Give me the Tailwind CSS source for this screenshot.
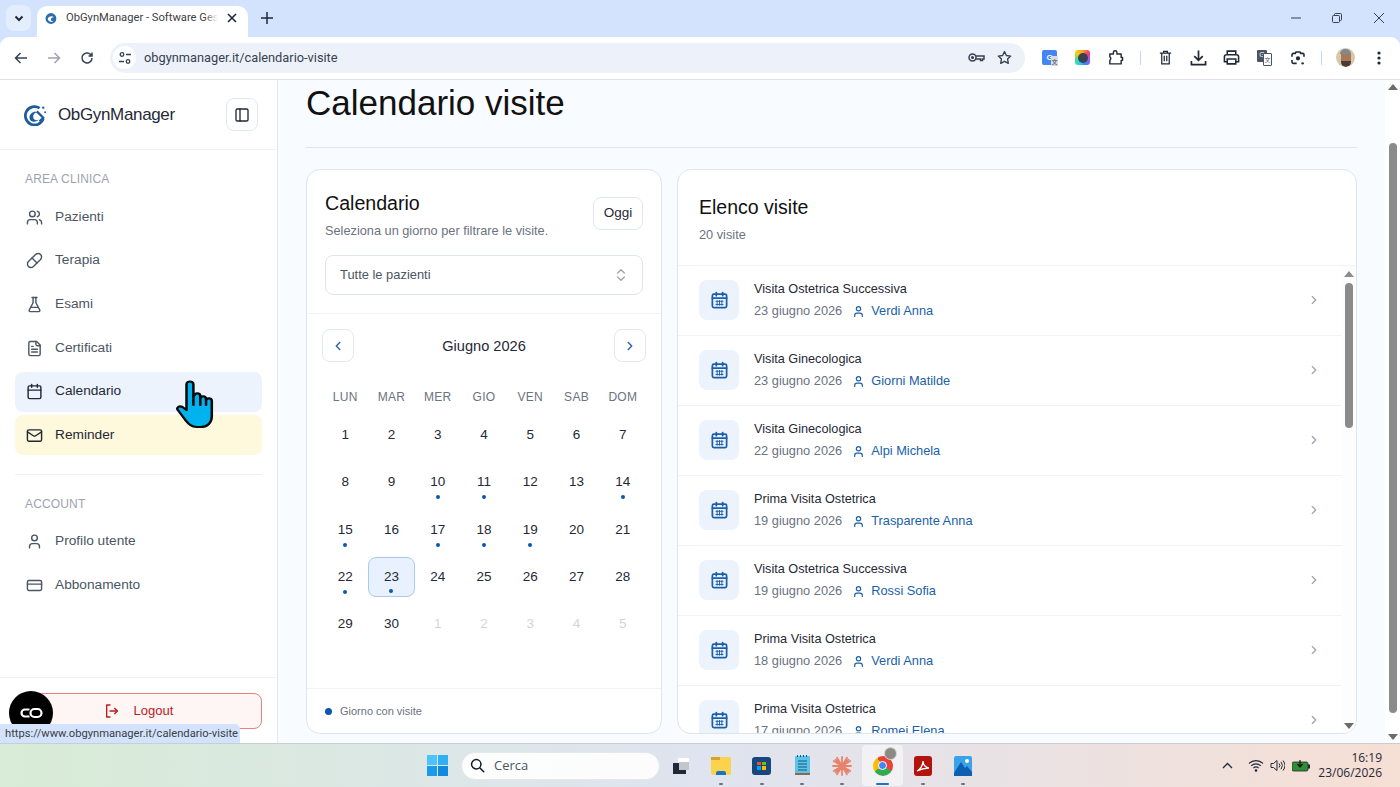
<!DOCTYPE html>
<html lang="it">
<head>
<meta charset="UTF-8">
<title>ObGynManager - Calendario visite</title>
<script src="https://cdn.jsdelivr.net/npm/@tailwindcss/browser@4"></script>
</head>
<body class="w-[1400px] h-[787px] overflow-hidden flex flex-col bg-white font-['Liberation_Sans',sans-serif]">

<!-- Barra schede -->
<div class="h-[37px] shrink-0 bg-[#d3e3fd] flex items-end relative font-['Roboto',sans-serif]">
  <div class="absolute left-[6px] top-[5px] w-[25px] h-[26px] rounded-lg bg-[#e4edfc] flex items-center justify-center">
    <svg class="w-3 h-3" viewBox="0 0 12 12" fill="none" stroke="#1f2937" stroke-width="2"><path d="M2.500 4.500 6 8l3.500-3.500"/></svg>
  </div>
  <div class="ml-[37px] w-[211px] h-[31px] bg-white rounded-t-[10px] flex items-center pl-[7px] pr-[8px] pb-[7px]">
    <svg class="w-[13px] h-[13px] ml-[1px]" viewBox="0 0 24 24"><circle cx="11" cy="12" r="10" fill="#2b6cb0"/><path d="M5 12c3-5 9-5 12-2-4-1-6 1-6 4 0 2 2 4 5 4-5 2-11-1-11-6Z" fill="#fff"/></svg>
    <span class="relative ml-[8px] w-[152px] text-[11.200px] text-[#3c4043] whitespace-nowrap overflow-hidden">ObGynManager - Software Gest<span class="absolute right-0 top-0 bottom-0 w-[14px] bg-linear-to-r from-white/0 to-white"></span></span>
    <svg class="ml-[9px] w-[10px] h-[10px]" viewBox="0 0 10 10" stroke="#1f2937" stroke-width="1.600"><path d="m1 1 8 8M9 1 1 9"/></svg>
  </div>
  <svg class="absolute left-[261px] top-[12px] w-3 h-3" viewBox="0 0 12 12" stroke="#1f2937" stroke-width="1.500"><path d="M6 0v12M0 6h12"/></svg>
  <div class="ml-auto h-full flex items-center pb-[1px]">
    <svg class="w-[10px] h-[10px] mr-[31px]" viewBox="0 0 10 10" stroke="#374151" stroke-width="1"><path d="M0 5h10"/></svg>
    <svg class="w-[10px] h-[10px] mr-[32px]" viewBox="0 0 10 10" fill="none" stroke="#374151" stroke-width="1"><rect x=".5" y="2.500" width="7" height="7" rx="1"/><path d="M2.500 2.500v-1a1 1 0 0 1 1-1h5a1 1 0 0 1 1 1v5a1 1 0 0 1-1 1h-1"/></svg>
    <svg class="w-[10px] h-[10px] mr-[16px]" viewBox="0 0 10 10" stroke="#374151" stroke-width="1"><path d="m0 0 10 10M10 0 0 10"/></svg>
  </div>
</div>

<!-- Barra indirizzi -->
<div class="h-[43px] shrink-0 bg-[#d3e3fd]">
  <div class="h-full bg-white rounded-t-[9px] border-b border-[#dfe3e8] flex items-center pl-[4px] pb-[1px]">
    <div class="w-[33px] flex justify-center"><svg class="w-[14px] h-[14px]" viewBox="0 0 14 14" fill="none" stroke="#374151" stroke-width="1.500"><path d="M13 7H1.500M6.500 2l-5 5 5 5"/></svg></div>
    <div class="w-[33px] flex justify-center"><svg class="w-[14px] h-[14px]" viewBox="0 0 14 14" fill="none" stroke="#9ca3af" stroke-width="1.500"><path d="M1 7h11.500M7.500 2l5 5-5 5"/></svg></div>
    <div class="w-[33px] flex justify-center"><svg class="w-[14px] h-[14px]" viewBox="0 0 14 14" fill="none" stroke="#374151" stroke-width="1.500"><path d="M12 7a5 5 0 1 1-1.500-3.600L12 5M12 1.500V5H8.500"/></svg></div>
    <div class="ml-[7px] w-[915px] h-[30px] rounded-full bg-[#edf2fa] flex items-center pl-[3px] pr-[13px]">
      <div class="w-[23px] h-[23px] rounded-full bg-white flex items-center justify-center">
        <svg class="w-[14px] h-[14px]" viewBox="0 0 14 14" fill="none" stroke="#374151" stroke-width="1.300"><circle cx="4" cy="3.500" r="1.800"/><path d="M8 3.500h5M1 10.500h5"/><circle cx="10" cy="10.500" r="1.800"/></svg>
      </div>
      <span class="ml-[8px] text-[12.800px] text-[#374151] font-['Roboto',sans-serif]">obgynmanager.it/calendario-visite</span>
      <svg class="ml-auto w-[17px] h-[11px]" viewBox="0 0 17 11" fill="none" stroke="#374151" stroke-width="1.500"><circle cx="4.500" cy="5.500" r="3.500"/><circle cx="4.500" cy="5.500" r=".8" fill="#374151"/><path d="M8 4h8v3h-1.500v1.500h-2V7H8"/></svg>
      <svg class="ml-[12px] w-[15px] h-[15px]" viewBox="0 0 24 24" fill="none" stroke="#374151" stroke-width="2.200" stroke-linejoin="round"><path d="m12 2.500 3 6.300 6.900.9-5 4.800 1.200 6.900-6.100-3.300-6.100 3.300 1.200-6.900-5-4.800 6.900-.9Z"/></svg>
    </div>
    <div class="ml-[8px] w-[33px] flex justify-center">
      <div class="relative w-[15px] h-[15px] bg-[#4285f4] rounded-[2px] text-white text-[8px] font-bold flex items-center justify-center">G<span class="absolute left-[9px] top-[6px] w-[7px] h-[10px] bg-[#d9dce0] text-[#6b7280] text-[6px] flex items-center justify-center font-['Noto_Sans_CJK_SC',sans-serif]">文</span></div>
    </div>
    <div class="w-[33px] flex justify-center">
      <div class="w-[15px] h-[15px] rounded-[3px] bg-[conic-gradient(#f5a623,#f43f5e,#a855f7,#3b82f6,#22d3ee,#4ade80,#facc15,#f5a623)] flex items-center justify-center"><div class="w-[10px] h-[10px] rounded-full bg-[#374151]"></div></div>
    </div>
    <div class="w-[33px] flex justify-center"><svg class="w-[17px] h-[17px]" viewBox="0 0 24 24" fill="none" stroke="#1f2937" stroke-width="2" stroke-linejoin="round"><path d="M4 7h5V5a2.500 2.500 0 0 1 5 0v2h6v5h2v4h-2v5H4v-5a3 3 0 0 0 0-5Z"/></svg></div>
    <div class="ml-[8px] mr-[8px] w-px h-[14px] bg-[#c7d7f0]"></div>
    <div class="w-[33px] flex justify-center"><svg class="w-[15px] h-[15px]" viewBox="0 0 24 24" fill="none" stroke="#1f2937" stroke-width="2"><path d="M3 5h18M9 5V2h6v3M6 5v17h12V5M10 9v9M14 9v9"/></svg></div>
    <div class="w-[33px] flex justify-center"><svg class="w-[17px] h-[17px]" viewBox="0 0 24 24" fill="none" stroke="#1f2937" stroke-width="2.400"><path d="M12 2v13M6 10l6 6 6-6M2 17v5h20v-5"/></svg></div>
    <div class="w-[33px] flex justify-center"><svg class="w-[17px] h-[17px]" viewBox="0 0 24 24" fill="none" stroke="#1f2937" stroke-width="2.200"><path d="M6 8V3h12v5M6 18H2v-7a3 3 0 0 1 3-3h14a3 3 0 0 1 3 3v7h-4"/><path d="M6 14h12v7H6z"/></svg></div>
    <div class="w-[33px] flex justify-center">
      <div class="relative w-[15px] h-[16px]"><span class="absolute left-0 top-0 w-[10px] h-[12px] bg-[#4b5563] rounded-[1px] text-white text-[7px] flex items-center justify-center">G</span><span class="absolute left-[6px] top-[3px] w-[9px] h-[13px] bg-white border border-[#4b5563] rounded-[1px] text-[#4b5563] text-[6px] flex items-center justify-center font-['Noto_Sans_CJK_SC',sans-serif]">文</span></div>
    </div>
    <div class="w-[33px] flex justify-center"><svg class="w-[16px] h-[16px]" viewBox="0 0 24 24" fill="none" stroke="#1f2937" stroke-width="2.400"><path d="M3 10V7a2 2 0 0 1 2-2h3l1-2h6l1 2h3a2 2 0 0 1 2 2v3M3 15v3a2 2 0 0 0 2 2h5M21 15v0"/><circle cx="12" cy="12.500" r="2" fill="#1f2937"/><circle cx="19" cy="20" r="1.800" fill="#1f2937" stroke="none"/></svg></div>
    <div class="ml-[7px] mr-[7px] w-px h-[14px] bg-[#c7d7f0]"></div>
    <div class="w-[33px] flex justify-center">
      <div class="w-[19px] h-[19px] rounded-full overflow-hidden bg-[#d6c9a8] flex flex-col items-center">
        <div class="w-[11px] h-[5px] bg-[#7d8b8c] rounded-t-full mt-[1px]"></div>
        <div class="w-[10px] h-[7px] bg-[#a8785a]"></div>
        <div class="w-[10px] h-[6px] bg-[#4b3b33] rounded-b-full"></div>
      </div>
    </div>
    <div class="w-[33px] flex justify-center"><svg class="w-[4px] h-[14px]" viewBox="0 0 4 14" fill="#1f2937"><circle cx="2" cy="2" r="1.600"/><circle cx="2" cy="7" r="1.600"/><circle cx="2" cy="12" r="1.600"/></svg></div>
  </div>
</div>

<!-- Pagina -->
<div id="page" class="relative flex-1 min-h-0 flex overflow-hidden bg-[#f8fbff]">
  <aside class="w-[278px] shrink-0 bg-white border-r border-[#e2e8f0] flex flex-col">
    <div class="h-[70px] shrink-0 border-b border-[#eef1f5] flex items-center pl-[24px] pr-[19px]">
      <svg class="w-[22px] h-[22px]" viewBox="0 0 24 24" fill="none"><path d="M17 4.500A10 10 0 1 0 21 16" stroke="#1d5c9f" stroke-width="3"/><path d="M6 15c0-5 5-8 9-6-3 0-5 2-5 5 0 3 3 5 6 3-3 4-10 3-10-2Z" fill="#1d5c9f"/><path d="M14 8l7 7-4 4" stroke="#1d5c9f" stroke-width="2.500"/><circle cx="21" cy="4" r="1.300" fill="#1d5c9f"/><circle cx="23" cy="9" r="1" fill="#1d5c9f"/></svg>
      <span class="ml-[12px] text-[17px] text-[#1f2937] tracking-[-0.35px]">ObGynManager</span>
      <div class="ml-auto w-[32px] h-[33px] border border-[#e2e8f0] rounded-[8px] flex items-center justify-center">
        <svg class="w-4 h-4" viewBox="0 0 24 24" fill="none" stroke="#1f2937" stroke-width="2" stroke-linecap="round" stroke-linejoin="round"><rect width="18" height="18" x="3" y="3" rx="2"/><path d="M9 3v18"/></svg>
      </div>
    </div>
    <nav class="flex-1 px-[15px] pt-[22px]">
      <p class="pl-[10px] h-[15px] leading-[15px] text-[12px] text-[#9ca3af] tracking-[0.15px]">AREA CLINICA</p>
      <div id="navClinica" class="mt-[10px] flex flex-col gap-[3.700px]"></div>
      <div class="mt-[19px] h-px bg-[#eef1f5]"></div>
      <p class="mt-[22px] pl-[10px] h-[15px] leading-[15px] text-[12px] text-[#9ca3af] tracking-[0.15px]">ACCOUNT</p>
      <div id="navAccount" class="mt-[9px] flex flex-col gap-[3.700px]"></div>
    </nav>
    <div class="h-[66px] shrink-0 border-t border-[#eef1f5] px-[15px] pt-[15px]">
      <div class="h-[36px] rounded-[8px] border border-[#e08484] bg-[#fef5f5] flex items-center justify-center gap-[14px] text-[13px] text-[#b91c1c]">
        <svg class="w-[16px] h-[16px]" viewBox="0 0 24 24" fill="none" stroke="#b91c1c" stroke-width="2" stroke-linecap="round" stroke-linejoin="round"><path d="M9 3H4v18h5"/><path d="m16 16 4-4-4-4"/><path d="M20 12H9"/></svg>
        Logout
      </div>
    </div>
  </aside>

  <main class="flex-1 min-w-0 pl-[28px] pr-[28px] flex flex-col">
    <h1 class="mt-[3px] h-[40px] leading-[40px] text-[35px] text-[#111]">Calendario visite</h1>
    <div class="mt-[24px] h-px bg-[#dfe5ed]"></div>
    <div class="mt-[21px] flex gap-[15px] h-[565px]">

      <!-- Calendario -->
      <section class="w-[356px] shrink-0 bg-white border border-[#dfe5ed] rounded-[14px] flex flex-col overflow-hidden">
        <div class="h-[144px] shrink-0 border-b border-[#f0f3f7] px-[18px] pt-[21px]">
          <div class="flex justify-between">
            <div>
              <h2 class="h-[24px] leading-[24px] text-[19.600px] text-[#111]">Calendario</h2>
              <p class="mt-[8px] text-[12.750px] leading-[16px] text-[#6b7280]">Seleziona un giorno per filtrare le visite.</p>
            </div>
            <div class="mt-[6px] w-[50px] h-[33px] border border-[#e2e8f0] rounded-[8px] flex items-center justify-center text-[13.500px] text-[#1f2937]">Oggi</div>
          </div>
          <div class="mt-[16px] h-[40px] border border-[#dfe5ed] rounded-[8px] flex items-center pl-[14px] pr-[13px] text-[12.900px] text-[#4b5563]">
            Tutte le pazienti
            <svg class="ml-auto w-[16px] h-[16px]" viewBox="0 0 24 24" fill="none" stroke="#9ca3af" stroke-width="2" stroke-linecap="round" stroke-linejoin="round"><path d="m7 15 5 5 5-5"/><path d="m7 9 5-5 5 5"/></svg>
          </div>
        </div>
        <div class="flex-1 px-[15px] pt-[15px]">
          <div class="flex items-center justify-between">
            <div class="w-[32px] h-[33px] border border-[#e2e8f0] rounded-[8px] flex items-center justify-center"><svg class="w-[14px] h-[14px]" viewBox="0 0 24 24" fill="none" stroke="#2563a8" stroke-width="2.400" stroke-linecap="round" stroke-linejoin="round"><path d="m15 18-6-6 6-6"/></svg></div>
            <span class="pt-[2px] text-[14.600px] text-[#1f2937]">Giugno 2026</span>
            <div class="w-[32px] h-[33px] border border-[#e2e8f0] rounded-[8px] flex items-center justify-center"><svg class="w-[14px] h-[14px]" viewBox="0 0 24 24" fill="none" stroke="#2563a8" stroke-width="2.400" stroke-linecap="round" stroke-linejoin="round"><path d="m9 18 6-6-6-6"/></svg></div>
          </div>
          <div id="weekdays" class="mt-[28px] grid grid-cols-7 text-center text-[12px] leading-[15px] text-[#6b7280] tracking-[0.3px]"></div>
          <div id="days" class="mt-[10px] grid grid-cols-7 gap-y-[7.400px]"></div>
        </div>
        <div class="h-[45px] shrink-0 border-t border-[#f0f3f7] pl-[18px] flex items-center gap-[8px] text-[11px] text-[#6b7280]">
          <span class="w-[7px] h-[7px] rounded-full bg-[#0b57b0]"></span>Giorno con visite
        </div>
      </section>

      <!-- Elenco visite -->
      <section class="flex-1 min-w-0 bg-white border border-[#dfe5ed] rounded-[14px] flex flex-col overflow-hidden">
        <div class="h-[96px] shrink-0 border-b border-[#f0f3f7] pl-[21px] pt-[24px]">
          <h2 class="h-[26px] leading-[26px] text-[19.500px] text-[#111]">Elenco visite</h2>
          <p class="mt-[7px] text-[12.750px] leading-[15px] text-[#6b7280]">20 visite</p>
        </div>
        <div class="flex-1 min-h-0 flex overflow-hidden">
          <div id="visits" class="flex-1 min-w-0"></div>
          <div class="w-[14px] shrink-0 bg-[#fdfdfd] flex flex-col items-center pt-[5px] relative">
            <div class="w-0 h-0 border-x-[5px] border-x-transparent border-b-[6px] border-b-[#8b8b8b]"></div>
            <div class="mt-[6px] w-[8px] h-[145px] rounded-full bg-[#8b8b8b]"></div>
            <div class="absolute bottom-[4px] w-0 h-0 border-x-[5px] border-x-transparent border-t-[6px] border-t-[#6b6b6b]"></div>
          </div>
        </div>
      </section>
    </div>
  </main>

  <!-- Barra di scorrimento pagina -->
  <div class="w-[15px] shrink-0 bg-white flex flex-col items-center pt-[4px] relative">
    <div class="w-0 h-0 border-x-[5px] border-x-transparent border-b-[6px] border-b-[#6b6b6b]"></div>
    <div class="mt-[53px] w-[8px] h-[570px] rounded-full bg-[#8b8b8b]"></div>
    <div class="absolute bottom-[3px] w-0 h-0 border-x-[5px] border-x-transparent border-t-[6px] border-t-[#6b6b6b]"></div>
  </div>

  <!-- Widget, cursore e URL di stato -->
  <div class="absolute left-[9px] top-[611px] w-[44px] h-[44px] rounded-full bg-black flex items-center justify-center">
    <svg class="w-[24px] h-[12px]" viewBox="0 0 24 12" fill="none" stroke="#fff" stroke-width="2.200"><path d="M10.500 2.500H6a3.500 3.500 0 0 0 0 7h4.500"/><rect x="11.500" y="2" width="11" height="8" rx="4"/></svg>
  </div>
  <svg class="absolute left-[175px] top-[300px] w-[46px] h-[50px]" viewBox="0 0 40 50" preserveAspectRatio="none" stroke="#0a0a0a" stroke-width="2.200" stroke-linejoin="round" stroke-linecap="round">
    <path fill="#00b2ee" d="M10 24V4.500a3 3 0 0 1 6 0V16l1-1a2.600 2.600 0 0 1 5 1v2a2.600 2.600 0 0 1 5 .5V20a2.600 2.600 0 0 1 5 1v15c0 7-4 11-10 11h-3c-5 0-7-3-10-7L2.500 30c-1.500-2 1-5 4-3l3.500 3Z"/>
    <path fill="none" d="M16 16v9M22 18v7M27 19v6"/>
  </svg>
  <div class="absolute left-0 bottom-0 w-[240px] h-[19px] bg-[#d3e3fd] rounded-tr-[5px] pl-[5px] text-[11.200px] leading-[20px] text-[#3c4043] font-['Roboto',sans-serif] whitespace-nowrap overflow-hidden">https://www.obgynmanager.it/calendario-visite</div>
</div>

<!-- Barra delle applicazioni -->
<div class="h-[44px] shrink-0 border-t border-[#c9ced6] bg-linear-to-r from-[#d8ecd6] via-[#dfe4f0] to-[#f6dfd4] flex items-center font-['Open_Sans',sans-serif]">
  <div class="ml-[427px] w-[21px] h-[21px] grid grid-cols-2 gap-[1px]">
    <span class="bg-[#4cc2ff]"></span><span class="bg-[#2fb0f5]"></span><span class="bg-[#1a9bea]"></span><span class="bg-[#0f8ae0]"></span>
  </div>
  <div class="ml-[13px] w-[199px] h-[28px] rounded-full bg-white/90 border border-[#e5e7eb] flex items-center pl-[8px] text-[13px] text-[#4b5563]">
    <svg class="w-[15px] h-[15px]" viewBox="0 0 24 24" fill="none" stroke="#111827" stroke-width="2.400" stroke-linecap="round"><circle cx="10" cy="10" r="7.500"/><path d="m16 16 6 6"/></svg>
    <span class="ml-[9px]">Cerca</span>
  </div>
  <div class="ml-px flex h-full">
    <div class="relative w-[40.300px] flex items-center justify-center">
      <div class="relative w-[16px] h-[16px]"><span class="absolute right-0 top-0 w-[11px] h-[11px] bg-white"></span><span class="absolute left-0 bottom-0 w-[13px] h-[11px] bg-[#1f2937]"></span><span class="absolute right-0 top-[4px] w-[10px] h-[8px] bg-[#c3c6cc]"></span></div>
    </div>
    <div class="relative w-[40.300px] flex items-center justify-center">
      <div class="relative w-[20px] h-[18px] bg-[#fcd34d] rounded-[2px]"><span class="absolute left-0 top-0 w-[9px] h-[3px] bg-[#d9a520]"></span><span class="absolute left-[5px] bottom-0 w-[10px] h-[4px] bg-[#1a73c9] rounded-t-[2px]"></span></div>
      <span class="absolute bottom-[2px] w-[4px] h-[2px] rounded-full bg-[#6b7280]"></span>
    </div>
    <div class="relative w-[40.300px] flex items-center justify-center">
      <div class="w-[19px] h-[18px] bg-[#17477e] rounded-[3px] grid grid-cols-2 gap-px p-[5px]"><span class="bg-[#f25022]"></span><span class="bg-[#7fba00]"></span><span class="bg-[#00a4ef]"></span><span class="bg-[#ffb900]"></span></div>
      <span class="absolute bottom-[2px] w-[4px] h-[2px] rounded-full bg-[#6b7280]"></span>
    </div>
    <div class="relative w-[40.300px] flex items-center justify-center">
      <svg class="w-[15px] h-[21px]" viewBox="0 0 15 21"><rect y="1" width="15" height="18" rx="1" fill="#5cc4e8"/><rect y="18" width="15" height="2" fill="#8a6a4a"/><path d="M3 6h9M3 9h9M3 12h9M3 15h9" stroke="#17577e" stroke-width="1"/><path d="M2 1h1M5 1h1M8 1h1M11 1h1" stroke="#17577e" stroke-width="2"/></svg>
      <span class="absolute bottom-[2px] w-[4px] h-[2px] rounded-full bg-[#6b7280]"></span>
    </div>
    <div class="relative w-[40.300px] flex items-center justify-center">
      <svg class="w-[20px] h-[20px]" viewBox="0 0 20 20" stroke="#e8836b" stroke-width="1.800" stroke-linecap="round"><path d="M10 1v18M1 10h18M3.600 3.600l12.800 12.800M16.400 3.600 3.600 16.400M5 1.800l10 16.400M15 1.800 5 18.200M1.800 5l16.400 10M18.200 5 1.800 15"/></svg>
      <span class="absolute bottom-[2px] w-[4px] h-[2px] rounded-full bg-[#6b7280]"></span>
    </div>
    <div class="relative w-[40.300px] flex items-center justify-center bg-white/50 rounded-[4px] my-[1px]">
      <div class="w-[20px] h-[20px] rounded-full bg-[conic-gradient(#ea4335_0_33%,#34a853_33%_66%,#fbbc05_66%_90%,#ea4335_90%)] flex items-center justify-center"><span class="w-[9px] h-[9px] rounded-full bg-[#4285f4] border border-white"></span></div>
      <span class="absolute right-[6px] top-[2px] w-[13px] h-[13px] rounded-full bg-[#8d8a86] border border-white/60"></span>
      <span class="absolute bottom-[1px] w-[13px] h-[2px] rounded-full bg-[#1a73c9]"></span>
    </div>
    <div class="relative w-[40.300px] flex items-center justify-center">
      <svg class="w-[18px] h-[20px]" viewBox="0 0 18 20"><rect width="18" height="20" rx="3" fill="#b3130f"/><path d="M3 15c3-1 6-6 6-10 0 4 3 7 6 7-4 0-8 1-12 3Z" fill="none" stroke="#fff" stroke-width="1.300"/></svg>
      <span class="absolute bottom-[2px] w-[4px] h-[2px] rounded-full bg-[#6b7280]"></span>
    </div>
    <div class="relative w-[40.300px] flex items-center justify-center">
      <svg class="w-[18px] h-[20px]" viewBox="0 0 18 20"><rect width="18" height="20" rx="2" fill="#38a3e8"/><path d="M0 17 7 6l4 6 2-2 5 6v4H0Z" fill="#0f5fb0"/><circle cx="13" cy="5" r="2" fill="#fff"/></svg>
      <span class="absolute bottom-[2px] w-[4px] h-[2px] rounded-full bg-[#6b7280]"></span>
    </div>
  </div>
  <div class="ml-auto flex items-center pr-[18px]">
    <svg class="w-[11px] h-[7px]" viewBox="0 0 11 7" fill="none" stroke="#1f2937" stroke-width="1.300"><path d="m1 6 4.500-4.500L10 6"/></svg>
    <svg class="ml-[15px] w-[16px] h-[13px]" viewBox="0 0 16 13" fill="none" stroke="#1f2937" stroke-width="1.100"><path d="M1 4.500a10 10 0 0 1 14 0M3.200 6.800a7 7 0 0 1 9.600 0M5.400 9a4 4 0 0 1 5.200 0"/><circle cx="8" cy="11.500" r=".8" fill="#1f2937"/></svg>
    <svg class="ml-[6px] w-[15px] h-[13px]" viewBox="0 0 15 13" fill="none" stroke="#1f2937" stroke-width="1"><path d="M1 4.500v4h2.500L7 11.500v-10L3.500 4.500Z"/><path d="M9 4.500a3 3 0 0 1 0 4M11 2.800a6 6 0 0 1 0 7.400M13 1.500a8 8 0 0 1 0 10"/></svg>
    <svg class="ml-[7px] w-[18px] h-[12px]" viewBox="0 0 18 12"><rect y="2" width="16" height="9" rx="1.500" fill="#2f8f2f" stroke="#1f2937" stroke-width=".8"/><rect x="16" y="4.500" width="2" height="4" fill="#1f2937"/><path d="M8 0v6M5.500 4 8 7l2.500-3" stroke="#111" fill="none" stroke-width="1.200"/></svg>
    <div class="ml-[8px] text-right text-[12px] leading-[14.500px] text-[#1f2937]">16:19<br>23/06/2026</div>
  </div>
</div>

<script>
  const icons = {
    users: '<path d="M16 21v-2a4 4 0 0 0-4-4H6a4 4 0 0 0-4 4v2"/><circle cx="9" cy="7" r="4"/><path d="M22 21v-2a4 4 0 0 0-3-3.870"/><path d="M16 3.130a4 4 0 0 1 0 7.750"/>',
    pill: '<path d="m10.500 20.500 10-10a4.950 4.950 0 1 0-7-7l-10 10a4.950 4.950 0 1 0 7 7Z"/><path d="m8.500 8.500 7 7"/>',
    flask: '<path d="M10 2v7.500L4.500 20a1.500 1.500 0 0 0 1.300 2h12.400a1.500 1.500 0 0 0 1.300-2L14 9.500V2"/><path d="M8.500 2h7"/><path d="M7 16h10"/>',
    file: '<path d="M15 2H6a2 2 0 0 0-2 2v16a2 2 0 0 0 2 2h12a2 2 0 0 0 2-2V7Z"/><path d="M14 2v4a2 2 0 0 0 2 2h4"/><path d="M10 9H8"/><path d="M16 13H8"/><path d="M16 17H8"/>',
    calendar: '<path d="M8 2v4"/><path d="M16 2v4"/><rect width="18" height="18" x="3" y="4" rx="2"/><path d="M3 10h18"/>',
    mail: '<rect width="20" height="16" x="2" y="4" rx="2"/><path d="m22 7-8.970 5.700a1.940 1.940 0 0 1-2.060 0L2 7"/>',
    user: '<path d="M19 21v-2a4 4 0 0 0-4-4H9a4 4 0 0 0-4 4v2"/><circle cx="12" cy="7" r="4"/>',
    card: '<rect width="20" height="14" x="2" y="5" rx="2"/><path d="M2 10h20"/>'
  };

  function navItem(item) {
    const stateClass = item.state === 'active' ? 'bg-[#edf3fc] text-[#1f2937]'
      : item.state === 'warn' ? 'bg-[#fef8dc] text-[#1f2937]'
      : 'text-[#4b5563]';
    return `<div class="h-10 rounded-[8px] flex items-center pl-[11px] text-[13.700px] ${stateClass}">
      <svg class="w-[17px] h-[17px] shrink-0" viewBox="0 0 24 24" fill="none" stroke="currentColor" stroke-width="2" stroke-linecap="round" stroke-linejoin="round">${icons[item.icon]}</svg>
      <span class="ml-[12px]">${item.label}</span>
    </div>`;
  }

  document.getElementById('navClinica').innerHTML = [
    { icon: 'users', label: 'Pazienti' },
    { icon: 'pill', label: 'Terapia' },
    { icon: 'flask', label: 'Esami' },
    { icon: 'file', label: 'Certificati' },
    { icon: 'calendar', label: 'Calendario', state: 'active' },
    { icon: 'mail', label: 'Reminder', state: 'warn' }
  ].map(navItem).join('');

  document.getElementById('navAccount').innerHTML = [
    { icon: 'user', label: 'Profilo utente' },
    { icon: 'card', label: 'Abbonamento' }
  ].map(navItem).join('');

  document.getElementById('weekdays').innerHTML = ['LUN', 'MAR', 'MER', 'GIO', 'VEN', 'SAB', 'DOM']
    .map(d => `<span>${d}</span>`).join('');

  // Giorni con visite in giugno
  const withVisits = [10, 11, 14, 15, 17, 18, 19, 22, 23];
  let cells = '';
  for (let d = 1; d <= 30; d++) {
    const selected = d === 23 ? 'bg-[#e8f1fd] border border-[#a9c9ee] rounded-[8px]' : '';
    const dot = withVisits.includes(d) ? '<span class="absolute bottom-[3px] w-[4px] h-[4px] rounded-full bg-[#0b57b0]"></span>' : '';
    cells += `<div class="relative h-10 flex items-center justify-center text-[13.500px] text-[#1f2937] ${selected}">${d}${dot}</div>`;
  }
  for (let d = 1; d <= 5; d++) {
    cells += `<div class="h-10 flex items-center justify-center text-[13.500px] text-[#d1d5db]">${d}</div>`;
  }
  document.getElementById('days').innerHTML = cells;

  const visits = [
    ['Visita Ostetrica Successiva', '23 giugno 2026', 'Verdi Anna'],
    ['Visita Ginecologica', '23 giugno 2026', 'Giorni Matilde'],
    ['Visita Ginecologica', '22 giugno 2026', 'Alpi Michela'],
    ['Prima Visita Ostetrica', '19 giugno 2026', 'Trasparente Anna'],
    ['Visita Ostetrica Successiva', '19 giugno 2026', 'Rossi Sofia'],
    ['Prima Visita Ostetrica', '18 giugno 2026', 'Verdi Anna'],
    ['Prima Visita Ostetrica', '17 giugno 2026', 'Romei Elena']
  ];
  document.getElementById('visits').innerHTML = visits.map(v => `
    <div class="h-[70px] border-b border-[#f0f3f7] flex items-center pl-[21px] pr-[21px] pb-[1px]">
      <div class="w-10 h-10 shrink-0 rounded-[8px] bg-[#edf3fc] flex items-center justify-center">
        <svg class="w-[19px] h-[19px]" viewBox="0 0 24 24" fill="none" stroke="#1a5fa8" stroke-width="2.200" stroke-linecap="round" stroke-linejoin="round"><path d="M8 2v4"/><path d="M16 2v4"/><rect width="18" height="17" x="3" y="4" rx="2"/><path d="M3 9h18"/><path d="M7.500 13h9M7.500 17h9M9 12v6M12 12v6M15 12v6" stroke-width="1.200"/></svg>
      </div>
      <div class="ml-[15px]">
        <p class="text-[12.700px] leading-[16px] text-[#1f2937]">${v[0]}</p>
        <p class="mt-[6px] flex items-center text-[12.800px] leading-[16px] text-[#6b7280]">${v[1]}
          <svg class="ml-[10px] w-[13px] h-[13px]" viewBox="0 0 24 24" fill="none" stroke="#1a5fa8" stroke-width="2.200" stroke-linecap="round" stroke-linejoin="round"><path d="M19 21v-2a4 4 0 0 0-4-4H9a4 4 0 0 0-4 4v2"/><circle cx="12" cy="7" r="4"/></svg>
          <span class="ml-[6px] text-[#1a5fa8]">${v[2]}</span>
        </p>
      </div>
      <svg class="ml-auto w-[14px] h-[14px]" viewBox="0 0 24 24" fill="none" stroke="#9ca3af" stroke-width="2" stroke-linecap="round" stroke-linejoin="round"><path d="m9 18 6-6-6-6"/></svg>
    </div>`).join('');
</script>
</body>
</html>
